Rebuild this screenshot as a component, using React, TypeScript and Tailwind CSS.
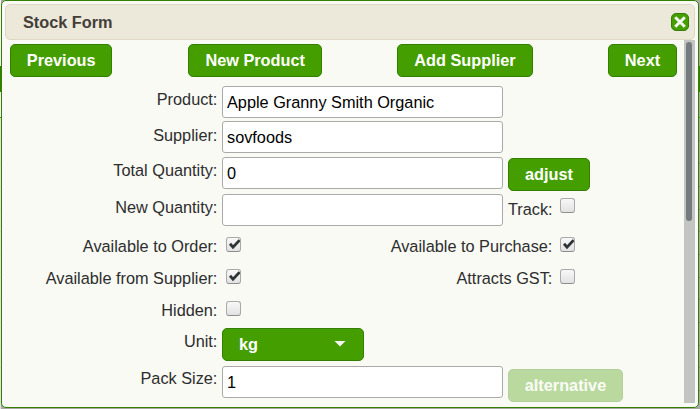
import React, { useState } from "react";

const ticks = [140, 163, 186, 209, 231, 254, 277, 299, 322, 345, 367, 390];

const buttonStyle =
  "h-[33px] shrink-0 rounded-[5px] border border-[#338000] bg-[#459e00] text-[16.3px] leading-[31px] font-bold text-white text-center";

function Check({ id, value }: { id: string; value: boolean }) {
  const [checked, setChecked] = useState(value);

  return (
    <button
      type="button"
      role="checkbox"
      aria-label={id}
      aria-checked={checked}
      onClick={() => setChecked(!checked)}
      className="block size-[15px] rounded-[3px] border border-[#aaaaaa] border-b-[#8e8e8e] bg-linear-to-b from-[#f8f8f8] to-[#e2e2e2]"
    >
      {checked && (
        <svg viewBox="0 0 13 13" className="size-[13px]">
          <path d="M3 5.8 L6 9.2 L12.6 2.2" fill="none" stroke="#2e3436" strokeWidth="2.8" />
        </svg>
      )}
    </button>
  );
}

function Label({ children, className = "" }: { children: React.ReactNode; className?: string }) {
  return <label className={`w-[212.4px] shrink-0 text-right leading-[18px] ${className}`}>{children}</label>;
}

function TextField({ label, value }: { label: string; value: string }) {
  const [text, setText] = useState(value);

  return (
    <input
      aria-label={label}
      value={text}
      onChange={(ev) => setText(ev.target.value)}
      className="ml-[4.6px] h-8 w-[281px] shrink-0 rounded-[3px] border border-[#aaaaaa] bg-white pl-1 text-black outline-none"
    />
  );
}

function App() {
  return (
    <div className="relative h-[409px] w-[700px] overflow-hidden bg-[#a8a8a6] font-['Liberation_Sans',Arial,sans-serif] text-[16.3px] text-[#2d2d2d]">
      {/* Page behind the dialog */}
      <div className="absolute top-[66px] left-0 h-[26px] w-full bg-[#338000]" />
      <div className="absolute top-[117px] left-0 h-px w-full bg-[#459e00]" />
      {ticks.map((top) => (
        <div key={top} className="absolute left-0 h-px w-full bg-[#858585]" style={{ top }} />
      ))}
      <div className="absolute top-0 left-0 h-[66px] w-px bg-[#f4f4f4]" />
      <div className="absolute top-[92px] left-0 h-[25px] w-px bg-[#f4f4f4]" />
      <div className="absolute top-[118px] left-0 h-[291px] w-px bg-[#f4f4f4]/75" />

      <div className="relative ml-px flex h-[408px] w-[698px] flex-col rounded-[5px] border border-[#338000] bg-[#f9faf4] px-[3px] pt-[3px]">
        {/* Title bar */}
        <div className="flex h-9 shrink-0 items-center justify-between rounded-[5px] border border-[#dfd9c3] bg-[#ece8da] pr-[5px] pl-[17px]">
          <h1 className="text-[16.3px] font-bold text-[#433f38]">Stock Form</h1>
          <button
            type="button"
            aria-label="Close"
            className="flex size-[18px] items-center justify-center rounded-[5px] border border-[#338000] bg-[#459e00]"
          >
            <svg viewBox="0 0 12 12" className="size-3">
              <path d="M1.2 1.2 L10.8 10.8 M10.8 1.2 L1.2 10.8" stroke="#f3f6ee" strokeWidth="3" />
            </svg>
          </button>
        </div>

        <div className="flex h-[363px]">
          <form className="w-[679px] pt-1" onSubmit={(ev) => ev.preventDefault()}>
            {/* Toolbar */}
            <div className="mb-[9px] ml-[5px] flex w-[667px]">
              <button type="button" className={`${buttonStyle} w-[102.4px]`}>Previous</button>
              <button type="button" className={`${buttonStyle} ml-[76px] w-[133.6px]`}>New Product</button>
              <button type="button" className={`${buttonStyle} ml-[75px] w-[136px]`}>Add Supplier</button>
              <button type="button" className={`${buttonStyle} ml-[75px] w-[69px]`}>Next</button>
            </div>

            <div className="flex h-[35px]">
              <Label className="pt-1">Product:</Label>
              <TextField label="Product" value="Apple Granny Smith Organic" />
            </div>
            <div className="flex h-9">
              <Label className="pt-[5px]">Supplier:</Label>
              <TextField label="Supplier" value="sovfoods" />
            </div>
            <div className="flex h-[37px]">
              <Label className="pt-1">Total Quantity:</Label>
              <TextField label="Total Quantity" value="0" />
              <button type="button" className={`${buttonStyle} mt-px ml-[5px] w-[82px]`}>adjust</button>
            </div>
            <div className="flex h-[43px]">
              <Label className="pt-1">New Quantity:</Label>
              <TextField label="New Quantity" value="" />
              <span className="mt-[6px] ml-[5px] w-[44px] leading-[18px]">Track:</span>
              <div className="mt-1 ml-2">
                <Check id="Track" value={false} />
              </div>
            </div>

            <div className="flex h-8">
              <Label>Available to Order:</Label>
              <div className="ml-[8.6px] w-[114px]"><Check id="Available to Order" value={true} /></div>
              <Label>Available to Purchase:</Label>
              <div className="ml-[7.6px]"><Check id="Available to Purchase" value={true} /></div>
            </div>
            <div className="flex h-8">
              <Label>Available from Supplier:</Label>
              <div className="ml-[8.6px] w-[114px]"><Check id="Available from Supplier" value={true} /></div>
              <Label>Attracts GST:</Label>
              <div className="ml-[7.6px]"><Check id="Attracts GST" value={false} /></div>
            </div>
            <div className="flex h-[27px]">
              <Label>Hidden:</Label>
              <div className="ml-[8.6px]"><Check id="Hidden" value={false} /></div>
            </div>
            <div className="flex h-[38px]">
              <Label className="pt-1">Unit:</Label>
              <button type="button" className={`${buttonStyle} ml-[4.6px] flex w-[142.4px] items-center justify-between pr-[17px] pl-4`}>
                kg
                <svg viewBox="0 0 12 6" className="mb-0.5 h-[6px] w-3">
                  <path d="M0.5 0 H11.5 L6 5.5 Z" fill="#f3f6ee" />
                </svg>
              </button>
            </div>
            <div className="flex">
              <Label className="pt-[3px]">Pack Size:</Label>
              <TextField label="Pack Size" value="1" />
              <button type="button" disabled className={`${buttonStyle} mt-[3px] ml-[5px] w-[115px] opacity-35`}>
                alternative
              </button>
            </div>
          </form>

          {/* Scrollbar */}
          <div className="h-[363px] w-[11px] bg-[#c3c5c3] pt-0.5 pl-0.5">
            <div className="h-[179px] w-1.5 rounded-full bg-[#747a7d]" />
          </div>
        </div>
      </div>
    </div>
  );
}

export default App;
